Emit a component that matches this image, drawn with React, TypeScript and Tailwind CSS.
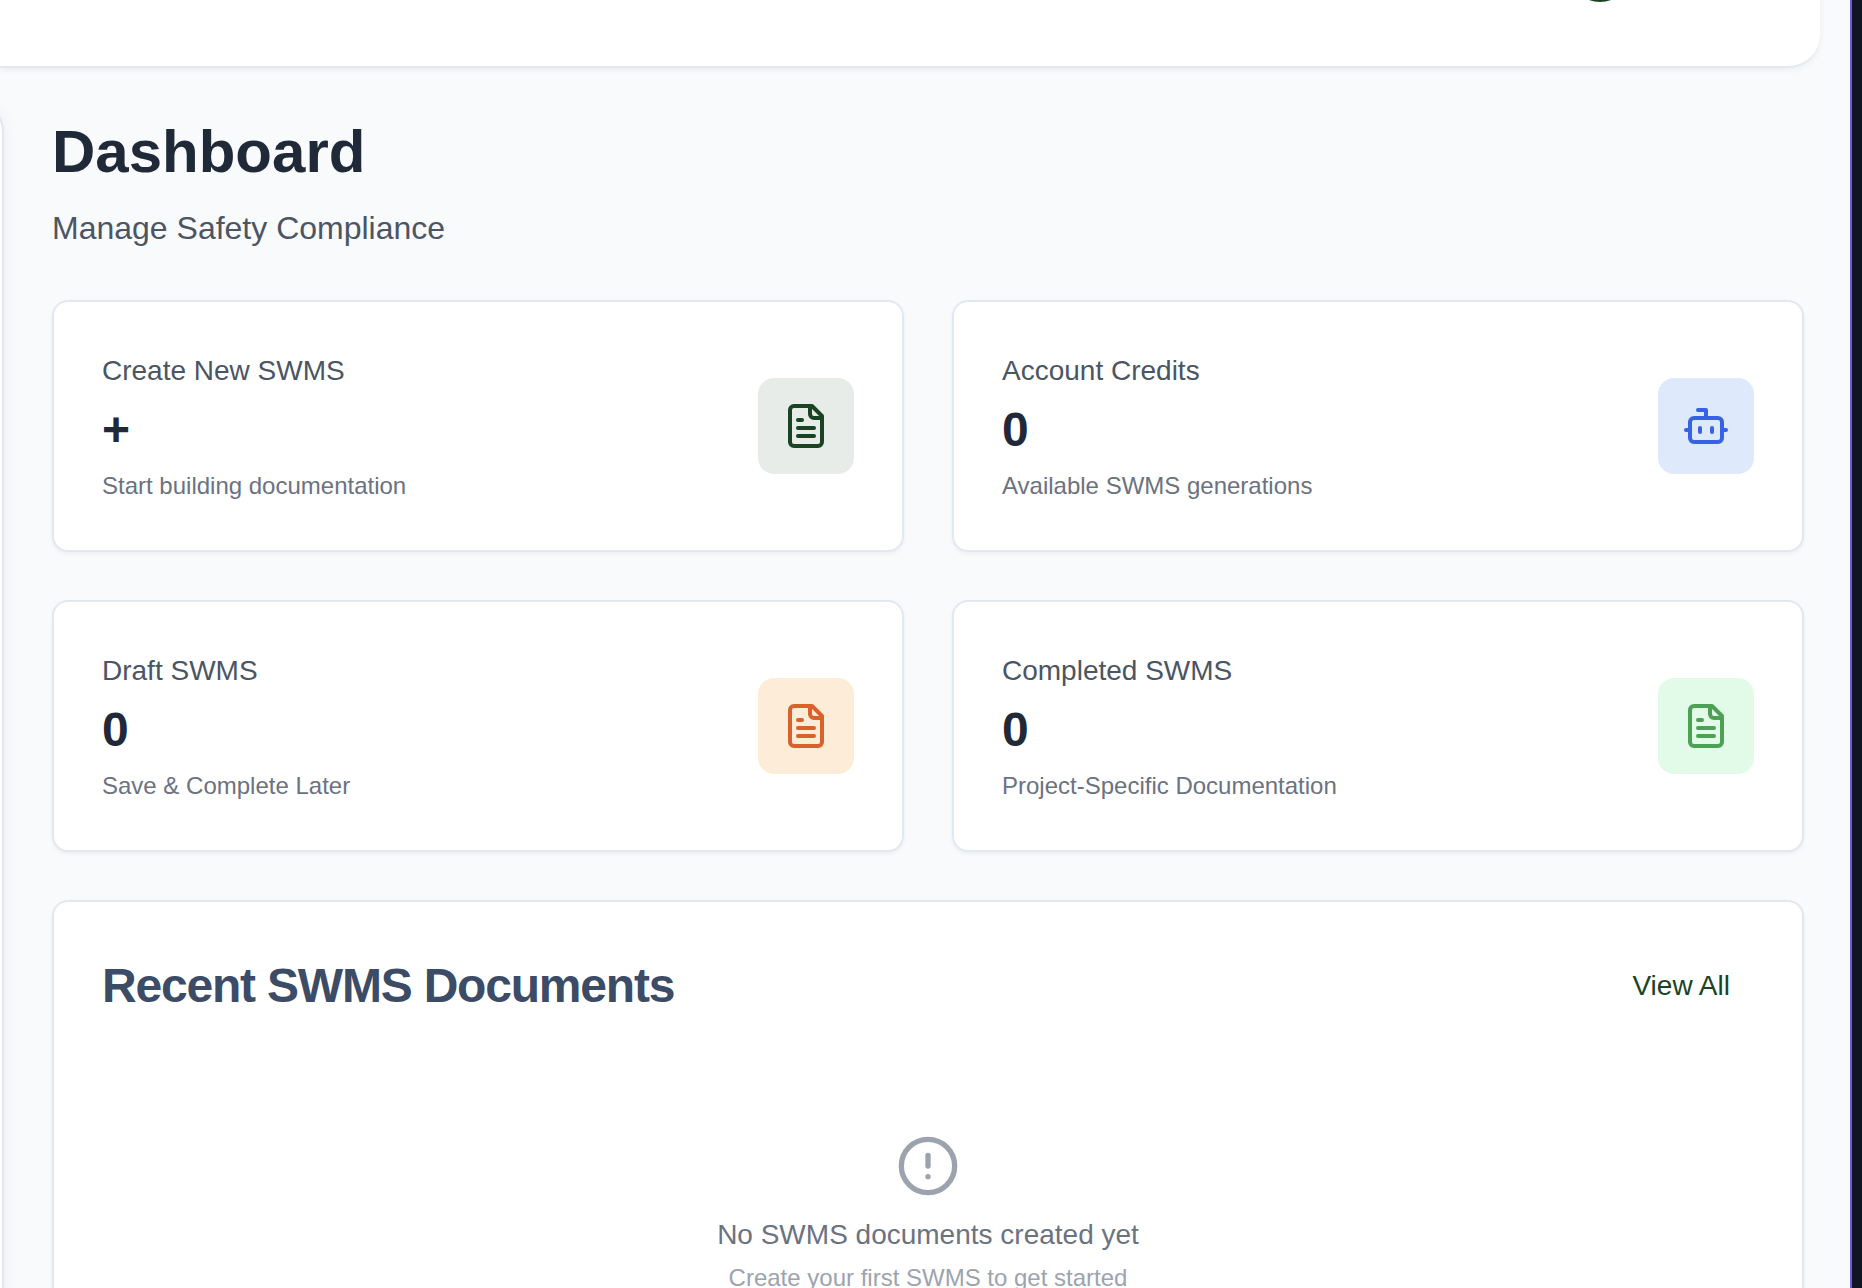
import type { ComponentType } from "react";
import { Bot, CircleAlert } from "lucide-react";

type IconProps = { className?: string };

type Stat = {
  title: string;
  value: string;
  note: string;
  icon: ComponentType<IconProps>;
  tile: string;
};

function DocumentIcon({ className }: IconProps) {
  return (
    <svg
      className={className}
      viewBox="0 0 24 24"
      fill="none"
      stroke="currentColor"
      strokeWidth="2"
      strokeLinecap="round"
      strokeLinejoin="round"
      aria-hidden="true"
    >
      <path d="M15 2H6a2 2 0 0 0-2 2v16a2 2 0 0 0 2 2h12a2 2 0 0 0 2-2V7Z" />
      <path d="M14 2v4a2 2 0 0 0 2 2h4" />
      <path d="M10 9H8" />
      <path d="M16 13H8" />
      <path d="M16 17H8" />
    </svg>
  );
}

const stats: Stat[] = [
  {
    title: "Create New SWMS",
    value: "+",
    note: "Start building documentation",
    icon: DocumentIcon,
    tile: "bg-[#e8ece9] text-[#1a4324]",
  },
  {
    title: "Account Credits",
    value: "0",
    note: "Available SWMS generations",
    icon: Bot,
    tile: "bg-[#dee9fc] text-[#3662e3]",
  },
  {
    title: "Draft SWMS",
    value: "0",
    note: "Save & Complete Later",
    icon: DocumentIcon,
    tile: "bg-[#fdedd8] text-[#d9622b]",
  },
  {
    title: "Completed SWMS",
    value: "0",
    note: "Project-Specific Documentation",
    icon: DocumentIcon,
    tile: "bg-[#e2fae8] text-[#4da154]",
  },
];

function StatCard({ title, value, note, icon: Icon, tile }: Stat) {
  return (
    <article className="flex items-center justify-between rounded-2xl border-2 border-slate-200 bg-white p-12 shadow-[0_2px_4px_rgba(0,0,0,0.05)]">
      <div>
        <h2 className="text-[28px] leading-[42px] text-[#4b5563]">{title}</h2>
        <p className="mt-1.5 text-5xl leading-16 font-bold text-[#1f2937]">{value}</p>
        <p className="mt-2 text-2xl leading-8 text-[#6b7280]">{note}</p>
      </div>
      <div className={`rounded-2xl p-6 ${tile}`}>
        <Icon className="size-12" aria-hidden="true" />
      </div>
    </article>
  );
}

export default function App() {
  return (
    <div className="flex h-screen overflow-hidden bg-[#f9fafc] font-['Liberation_Sans',Arial,sans-serif]">
      <div className="flex min-w-0 flex-1 flex-col">
        <header className="-mt-[62px] mr-[30px] flex shrink-0 justify-end rounded-br-4xl border-b-2 border-slate-200 bg-white pr-[188px] pb-16 shadow-[0_2px_6px_rgba(0,0,0,0.06)]">
          <button
            type="button"
            aria-label="Account"
            className="size-16 rounded-full bg-[#1a4324]"
          />
        </header>

        <div className="flex flex-1">
          <aside className="mt-8 -ml-[60px] w-16 shrink-0 rounded-tr-4xl border-2 border-slate-200 bg-white shadow-[0_2px_16px_rgba(0,0,0,0.06)]" />

          <main className="min-w-0 flex-1 pt-12 pr-[46px] pl-12">
            <h1 className="text-6xl leading-18 font-bold text-[#1f2937]">Dashboard</h1>
            <p className="mt-4 text-[32px] leading-12 text-[#4b5563]">Manage Safety Compliance</p>

            <section className="mt-12 grid grid-cols-2 gap-12" aria-label="Overview">
              {stats.map((stat) => (
                <StatCard key={stat.title} {...stat} />
              ))}
            </section>

            <section className="mt-12 rounded-2xl border-2 border-slate-200 bg-white shadow-[0_2px_4px_rgba(0,0,0,0.05)]">
              <div className="flex items-center justify-between p-12">
                <h2 className="text-5xl leading-none font-bold tracking-tight text-[#3c4b66]">
                  Recent SWMS Documents
                </h2>
                <button type="button" className="h-18 px-6 text-[28px] leading-[42px] text-[#1a4324]">
                  View All
                </button>
              </div>
              <div className="flex flex-col items-center px-12 pt-16 pb-28 text-center">
                <CircleAlert className="size-16 text-[#9ca3af]" aria-hidden="true" />
                <p className="mt-4 text-[28px] leading-[42px] text-[#6b7280]">
                  No SWMS documents created yet
                </p>
                <p className="mt-1.5 text-2xl leading-8 text-[#9ca3af]">
                  Create your first SWMS to get started
                </p>
              </div>
            </section>
          </main>
        </div>
      </div>

      <div className="w-3 shrink-0 border-l-2 border-[#6a5cd8] bg-[#101524]" />
    </div>
  );
}
